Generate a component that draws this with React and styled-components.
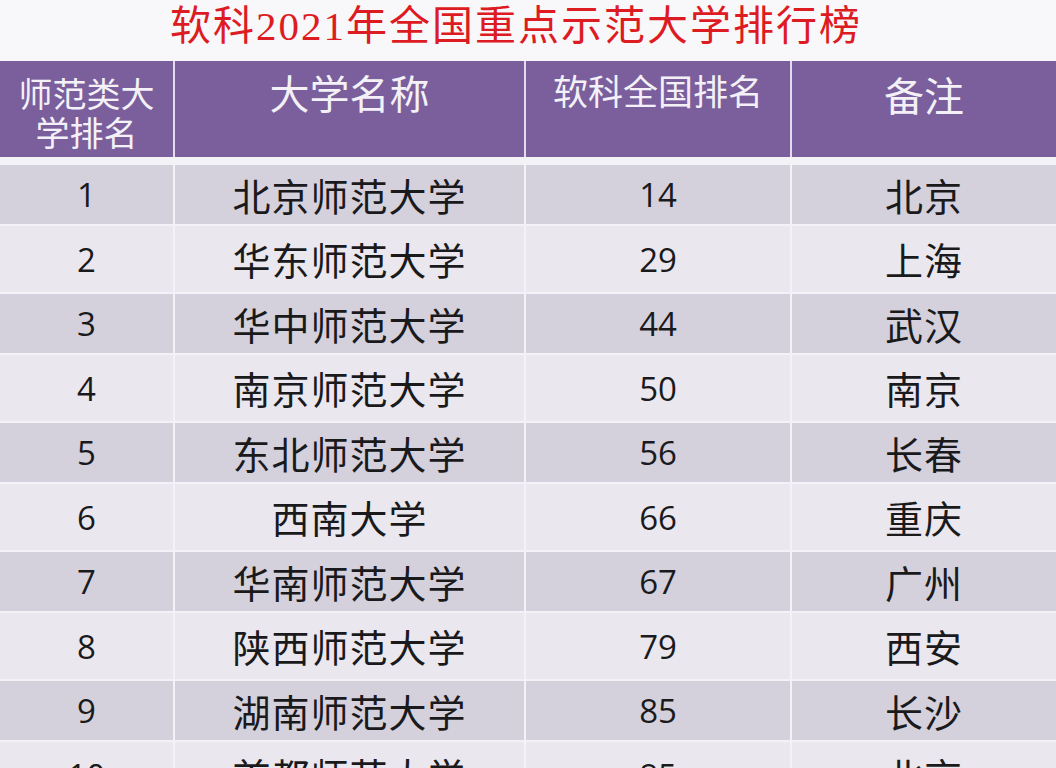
import React from "react";
import styled, { createGlobalStyle } from "styled-components";

const GlobalStyle = createGlobalStyle`
  html, body {
    margin: 0;
    padding: 0;
    background: #f8f7fa;
    overflow: hidden;
  }
  body {
    width: 1056px;
    height: 768px;
    font-family: "Noto Sans CJK SC", sans-serif;
  }
`;

const cols = "173px 349px 264px 264px";

const Page = styled.div`
  width: 1056px;
  height: 768px;
  overflow: hidden;
  display: flex;
  flex-direction: column;
`;

const Title = styled.h1`
  margin: 0;
  flex-shrink: 0;
  height: 61px;
  padding: 0 24px 8px 0;
  display: flex;
  align-items: center;
  justify-content: center;
  font-family: "Liberation Serif", "Noto Sans CJK SC", serif;
  font-weight: normal;
  font-size: 41px;
  letter-spacing: 2px;
  color: #dd1b22;
  line-height: 1;
  box-sizing: border-box;
`;

const Table = styled.div`
  flex-shrink: 0;
  display: flex;
  flex-direction: column;
  gap: 2px;
  background: #f3f2f6;
`;

const HeadRow = styled.div`
  flex-shrink: 0;
  display: grid;
  grid-template-columns: ${cols};
  column-gap: 2px;
  height: 96px;
  margin-bottom: 6px;
  background: #e4dcec;
`;

const HeadCell = styled.div`
  background: #7a5f9c;
  color: #f3f1f7;
  display: flex;
  justify-content: center;
  align-items: ${(p) => (p.$center ? "center" : "flex-start")};
  padding-top: ${(p) => p.$top || "10px"};
  font-size: ${(p) => p.$size || "40px"};
  line-height: ${(p) => (p.$center ? "39px" : "38px")};
  text-align: center;
  box-sizing: border-box;
`;

const Row = styled.div`
  display: grid;
  grid-template-columns: ${cols};
  column-gap: 2px;
  height: ${(p) => (p.$odd ? "59px" : "66px")};
  flex-shrink: 0;
`;

const Cell = styled.div`
  background: ${(p) => (p.$odd ? "#d4d1dc" : "#eae8ee")};
  color: #1a1a1c;
  display: flex;
  align-items: center;
  justify-content: center;
  font-size: ${(p) => (p.$num ? "33px" : "38px")};
  font-family: ${(p) =>
    p.$num
      ? '"Open Sans", "Noto Sans CJK SC", sans-serif'
      : '"Noto Sans CJK SC", sans-serif'};
  letter-spacing: ${(p) => (p.$num ? "0" : "1px")};
  line-height: 1;
`;

const data = [
  [1, "北京师范大学", 14, "北京"],
  [2, "华东师范大学", 29, "上海"],
  [3, "华中师范大学", 44, "武汉"],
  [4, "南京师范大学", 50, "南京"],
  [5, "东北师范大学", 56, "长春"],
  [6, "西南大学", 66, "重庆"],
  [7, "华南师范大学", 67, "广州"],
  [8, "陕西师范大学", 79, "西安"],
  [9, "湖南师范大学", 85, "长沙"],
  [10, "首都师范大学", 85, "北京"],
];

export default function App() {
  return (
    <Page>
      <GlobalStyle />
      <Title>软科2021年全国重点示范大学排行榜</Title>
      <Table>
        <HeadRow>
          <HeadCell $center $size="34px" $top="6px">
            师范类大
            <br />
            学排名
          </HeadCell>
          <HeadCell $top="12px">大学名称</HeadCell>
          <HeadCell $size="35px" $top="10px">
            软科全国排名
          </HeadCell>
          <HeadCell $top="14px">备注</HeadCell>
        </HeadRow>
        {data.map(([rank, name, score, city], i) => {
          const odd = i % 2 === 0;
          return (
            <Row key={rank} $odd={odd}>
              <Cell $odd={odd} $num>
                {rank}
              </Cell>
              <Cell $odd={odd}>{name}</Cell>
              <Cell $odd={odd} $num>
                {score}
              </Cell>
              <Cell $odd={odd}>{city}</Cell>
            </Row>
          );
        })}
      </Table>
    </Page>
  );
}
